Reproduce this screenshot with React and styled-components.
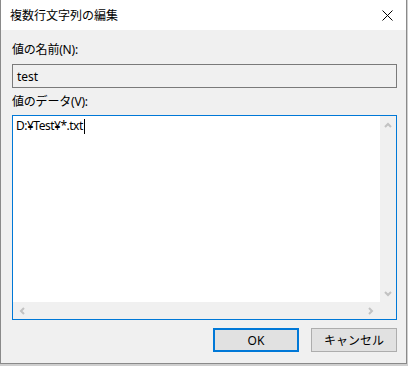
import React from 'react';
import styled, { createGlobalStyle } from 'styled-components';

const GlobalStyle = createGlobalStyle`
  html, body {
    margin: 0;
    padding: 0;
    background: #cfcfcf;
  }
  body {
    font-family: "Noto Sans", "Noto Sans CJK JP", sans-serif;
    font-size: 12px;
    color: #000;
  }
`;

const Window = styled.div`
  width: 405px;
  height: 363px;
  background: #f0f0f0;
  border: 1px solid #8a8a8a;
  border-top: none;
  display: flex;
  flex-direction: column;
`;

const TitleBar = styled.div`
  height: 30px;
  background: #fff;
  display: flex;
  align-items: center;
  justify-content: space-between;
  padding-left: 9px;
`;

const Title = styled.span`
  font-family: "Noto Sans CJK JP", sans-serif;
  font-size: 12px;
  line-height: 16px;
`;

const CloseButton = styled.div`
  width: 46px;
  height: 30px;
  display: flex;
  align-items: center;
  justify-content: center;
  margin-right: -4px;
`;

const Body = styled.div`
  flex: 1;
  display: flex;
  flex-direction: column;
  padding: 12px 9px 0 11px;
`;

const Label = styled.div`
  font-family: "Noto Sans", "Noto Sans CJK JP", sans-serif;
  font-size: 12px;
  line-height: 16px;
  height: 16px;
  letter-spacing: -0.2px;
  margin-top: ${p => p.$top || 0}px;
`;

const ReadOnlyField = styled.div`
  margin-top: 6px;
  height: 22px;
  border: 1px solid #7a7a7a;
  background: #f0f0f0;
  display: flex;
  align-items: center;
  padding-left: 4px;
  font-size: 12px;
`;

const EditBox = styled.div`
  margin-top: 5px;
  height: 203px;
  border: 1px solid #0078d7;
  display: grid;
  grid-template-columns: 1fr 16px;
  grid-template-rows: 1fr 17px;
`;

const EditArea = styled.div`
  background: #fff;
  padding: 2px 0 0 3px;
  font-size: 12px;
  line-height: 16px;
  letter-spacing: -0.5px;
  display: flex;
  align-items: flex-start;
`;

const Caret = styled.span`
  display: inline-block;
  width: 1px;
  height: 15px;
  background: #000;
  margin-left: 1px;
  margin-top: 1px;
`;

const ScrollBar = styled.div`
  background: #f0f0f0;
  display: flex;
  flex-direction: ${p => (p.$vertical ? 'column' : 'row')};
  align-items: center;
  justify-content: space-between;
  padding: ${p => (p.$vertical ? '6px 0 5px' : '0 6px 0 6px')};
`;

const Corner = styled.div`
  background: #f0f0f0;
`;

const Footer = styled.div`
  display: flex;
  justify-content: flex-end;
  gap: 12px;
  margin-top: 8px;
`;

const Button = styled.div`
  width: 86px;
  height: 24px;
  box-sizing: border-box;
  background: #e1e1e1;
  border: ${p => (p.$default ? '2px solid #0078d7' : '1px solid #adadad')};
  display: flex;
  align-items: center;
  justify-content: center;
  font-family: "Noto Sans", "Noto Sans CJK JP", sans-serif;
  font-size: 12px;
`;

const Chevron = ({ dir }) => {
  const paths = {
    up: 'M1 5 L4 2 L7 5',
    down: 'M1 2 L4 5 L7 2',
    left: 'M5 1 L2 4 L5 7',
    right: 'M2 1 L5 4 L2 7',
  };
  const vertical = dir === 'up' || dir === 'down';
  return (
    <svg width={vertical ? 8 : 7} height={vertical ? 7 : 8} viewBox={vertical ? '0 0 8 7' : '0 0 7 8'}>
      <path d={paths[dir]} fill="none" stroke="#c2c2c2" strokeWidth="2" />
    </svg>
  );
};

export default function App() {
  return (
    <>
      <GlobalStyle />
      <Window>
        <TitleBar>
          <Title>複数行文字列の編集</Title>
          <CloseButton>
            <svg width="11" height="11" viewBox="0 0 11 11">
              <path d="M0.5 0.5 L10.5 10.5 M10.5 0.5 L0.5 10.5" stroke="#000" strokeWidth="1" />
            </svg>
          </CloseButton>
        </TitleBar>
        <Body>
          <Label>値の名前(N):</Label>
          <ReadOnlyField>test</ReadOnlyField>
          <Label $top={6}>値のデータ(V):</Label>
          <EditBox>
            <EditArea>
              D:¥Test¥*.txt<Caret />
            </EditArea>
            <ScrollBar $vertical>
              <Chevron dir="up" />
              <Chevron dir="down" />
            </ScrollBar>
            <ScrollBar>
              <Chevron dir="left" />
              <Chevron dir="right" />
            </ScrollBar>
            <Corner />
          </EditBox>
          <Footer>
            <Button $default>OK</Button>
            <Button>キャンセル</Button>
          </Footer>
        </Body>
      </Window>
    </>
  );
}
